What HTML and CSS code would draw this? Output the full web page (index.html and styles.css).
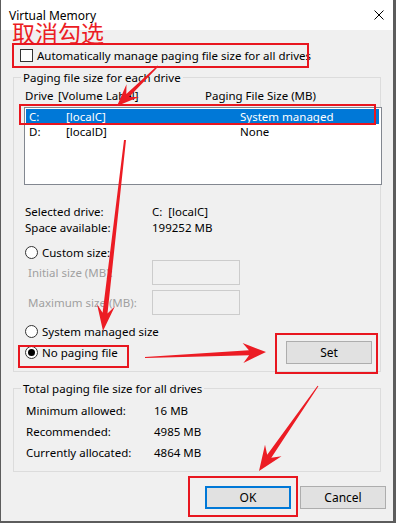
FILE: index.html
```html
<!DOCTYPE html>
<html lang="en">

<head>
    <meta charset="UTF-8">
    <meta name="viewport" content="width=device-width, initial-scale=1.0">
    <title>Virtual Memory</title>
    <link rel="stylesheet" href="styles.css">
</head>

<body>
    <div class="window">
        <div class="titlebar">
            <span class="title">Virtual Memory</span>
            <svg class="close" width="10" height="10" viewBox="0 0 10 10">
                <path d="M0.5 0.5 L9.5 9.5 M9.5 0.5 L0.5 9.5" stroke="#000" stroke-width="1" fill="none" />
            </svg>
        </div>

        <div class="content">
            <div class="check-row">
                <span class="checkbox"></span>
                <span>Automatically manage paging file size for all drives</span>
            </div>

            <fieldset class="group group-drives">
                <legend>Paging file size for each drive</legend>

                <div class="list-head">
                    <span class="head-drive">Drive</span>
                    <span class="head-label">[Volume Label]</span>
                    <span>Paging File Size (MB)</span>
                </div>

                <div class="listbox">
                    <div class="list-row selected">
                        <span class="col-drive">C:</span>
                        <span class="col-label">[localC]</span>
                        <span>System managed</span>
                    </div>
                    <div class="list-row">
                        <span class="col-drive">D:</span>
                        <span class="col-label">[localD]</span>
                        <span>None</span>
                    </div>
                </div>

                <div class="info">
                    <div class="info-row"><span class="info-key">Selected drive:</span><span>C:&nbsp; [localC]</span></div>
                    <div class="info-row"><span class="info-key">Space available:</span><span>199252 MB</span></div>
                </div>

                <div class="radio-row first"><span class="radio"></span><span>Custom size:</span></div>
                <div class="size-row"><span class="size-label">Initial size (MB):</span><span class="textbox"></span></div>
                <div class="size-row second"><span class="size-label">Maximum size (MB):</span><span class="textbox"></span></div>
                <div class="radio-row system"><span class="radio"></span><span>System managed size</span></div>

                <div class="last-row">
                    <div class="radio-row"><span class="radio checked"></span><span>No paging file</span></div>
                    <button class="btn btn-set">Set</button>
                </div>
            </fieldset>

            <fieldset class="group group-total">
                <legend>Total paging file size for all drives</legend>
                <div class="total-row"><span class="total-key">Minimum allowed:</span><span>16 MB</span></div>
                <div class="total-row"><span class="total-key">Recommended:</span><span>4985 MB</span></div>
                <div class="total-row"><span class="total-key">Currently allocated:</span><span>4864 MB</span></div>
            </fieldset>

            <div class="actions">
                <button class="btn btn-ok">OK</button>
                <button class="btn">Cancel</button>
            </div>
        </div>
    </div>

    <!-- red annotations drawn over the dialog -->
    <div class="marks">
        <div class="note">取消勾选</div>
        <div class="box box-auto"></div>
        <div class="box box-drive"></div>
        <div class="box box-nopaging"></div>
        <div class="box box-set"></div>
        <div class="box box-ok"></div>
        <svg class="arrows" width="396" height="523" viewBox="0 0 396 523">
            <polygon points="157.6,65.6 126.3,94.1 126.5,84.2 117,106 139,97.1 129.1,97 158.4,66.4" />
            <polygon points="124,139.9 102.6,312.8 97,304.1 103,331 114.9,306.2 107.5,313.4 126,140.1" />
            <polygon points="145,358 249.1,355.2 243.4,362.9 266,352 242.6,343 248.9,350.2 145,357" />
            <polygon points="317.6,385.7 267.2,454.8 265,444.8 259,471 281.5,456.2 271.3,457.7 318.4,386.3" />
        </svg>
    </div>
</body>

</html>
```

FILE: styles.css
```css
html {
    background-color: #5c5c5c;
}

body {
    margin: 0;
    position: relative;
    width: 396px;
    height: 523px;
    overflow: hidden;
    font-family: "Noto Sans", "Open Sans", sans-serif;
    font-size: 11.5px;
    color: #000;
}

.window {
    margin-left: 1px;
    width: 392px;
    height: 521px;
    background-color: #f0f0f0;
}

.titlebar {
    height: 30px;
    background-color: #fff;
    display: flex;
    align-items: center;
    justify-content: space-between;
    padding: 0 8px 0 8px;
    box-sizing: border-box;
}

.title {
    font-size: 12px;
    line-height: 15px;
}

.close {
    margin-right: 1px;
    margin-top: -1px;
}

.content {
    padding: 0 12px;
}

.check-row {
    display: flex;
    align-items: center;
    height: 16px;
    margin-top: 17px;
    padding-left: 7px;
    gap: 4px;
}

.checkbox {
    width: 13px;
    height: 13px;
    box-sizing: border-box;
    border: 1px solid #333;
    background-color: #fff;
}

.group {
    margin: 7px 0 0 0;
    padding: 0;
    border: 1px solid #dcdcdc;
    min-width: 0;
}

.group legend {
    margin-left: 7px;
    padding: 0 2px;
    line-height: 15px;
}

.group-drives {
    padding-top: 3px;
    padding-bottom: 7px;
}

.list-head {
    display: flex;
    height: 15px;
    line-height: 15px;
    padding-left: 11px;
}

.head-drive {
    width: 33px;
}

.head-label {
    width: 147px;
}

.listbox {
    margin-top: 4px;
    margin-left: 10px;
    width: 358px;
    height: 78px;
    box-sizing: border-box;
    border: 1px solid #828790;
    background-color: #fff;
    padding: 1px;
}

.list-row {
    display: flex;
    height: 15px;
    line-height: 15px;
    padding-left: 3px;
}

.list-row.selected {
    background-color: #0078d7;
    color: #fff;
    margin-right: 1px;
}

.col-drive {
    width: 37px;
}

.col-label {
    width: 174px;
}

.info {
    margin-top: 19px;
    padding-left: 11px;
}

.info-row {
    display: flex;
    height: 16px;
    line-height: 16px;
}

.info-key {
    width: 127px;
}

.radio-row {
    display: flex;
    align-items: center;
    height: 15px;
    padding-left: 11px;
    gap: 4px;
}

.radio-row.first {
    margin-top: 9px;
}

.radio-row.system {
    margin-top: 9px;
}

.radio {
    width: 13px;
    height: 13px;
    box-sizing: border-box;
    border: 1px solid #333;
    border-radius: 50%;
    background-color: #fff;
    display: flex;
    align-items: center;
    justify-content: center;
}

.radio.checked::after {
    content: "";
    width: 7px;
    height: 7px;
    border-radius: 50%;
    background-color: #000;
}

.size-row {
    display: flex;
    align-items: center;
    height: 25px;
    padding-left: 14px;
    color: #a0a0a0;
}

.size-row.second {
    margin-top: 5px;
}

.size-label {
    width: 124px;
}

.textbox {
    width: 88px;
    height: 25px;
    box-sizing: border-box;
    border: 1px solid #cccccc;
    background-color: #f0f0f0;
}

.last-row {
    display: flex;
    align-items: center;
    justify-content: space-between;
    margin-top: 2px;
    height: 23px;
}

.btn {
    font-family: inherit;
    font-size: 12px;
    color: #000;
    width: 86px;
    height: 23px;
    box-sizing: border-box;
    border: 1px solid #adadad;
    background-color: #e1e1e1;
    padding: 0;
    margin: 0;
}

.btn-set {
    margin-right: 8px;
}

.btn-ok {
    border: 2px solid #0078d7;
}

.group-total {
    margin-top: 9px;
    padding-top: 4px;
    padding-bottom: 8px;
}

.total-row {
    display: flex;
    height: 21px;
    line-height: 21px;
    padding-left: 12px;
}

.total-key {
    width: 128px;
}

.actions {
    display: flex;
    justify-content: flex-end;
    gap: 9px;
    margin-top: 14px;
    margin-right: -5px;
}

/* annotations */

.marks {
    position: absolute;
    left: 0;
    top: 0;
    width: 396px;
    height: 523px;
    pointer-events: none;
}

.note {
    position: absolute;
    left: 12px;
    top: 21px;
    font-family: "Noto Sans CJK SC", sans-serif;
    font-size: 23px;
    line-height: 23px;
    color: #ec1c24;
}

.box {
    position: absolute;
    box-sizing: border-box;
    border: 2px solid #e8161f;
}

.box-auto {
    left: 12px;
    top: 43px;
    width: 297px;
    height: 25px;
}

.box-drive {
    left: 19px;
    top: 104px;
    width: 357px;
    height: 21px;
}

.box-nopaging {
    left: 18px;
    top: 345px;
    width: 111px;
    height: 23px;
}

.box-set {
    left: 275px;
    top: 333px;
    width: 103px;
    height: 41px;
}

.box-ok {
    left: 188px;
    top: 476px;
    width: 110px;
    height: 41px;
}

.arrows {
    position: absolute;
    left: 0;
    top: 0;
}

.arrows polygon {
    fill: #ec1c24;
}
```
